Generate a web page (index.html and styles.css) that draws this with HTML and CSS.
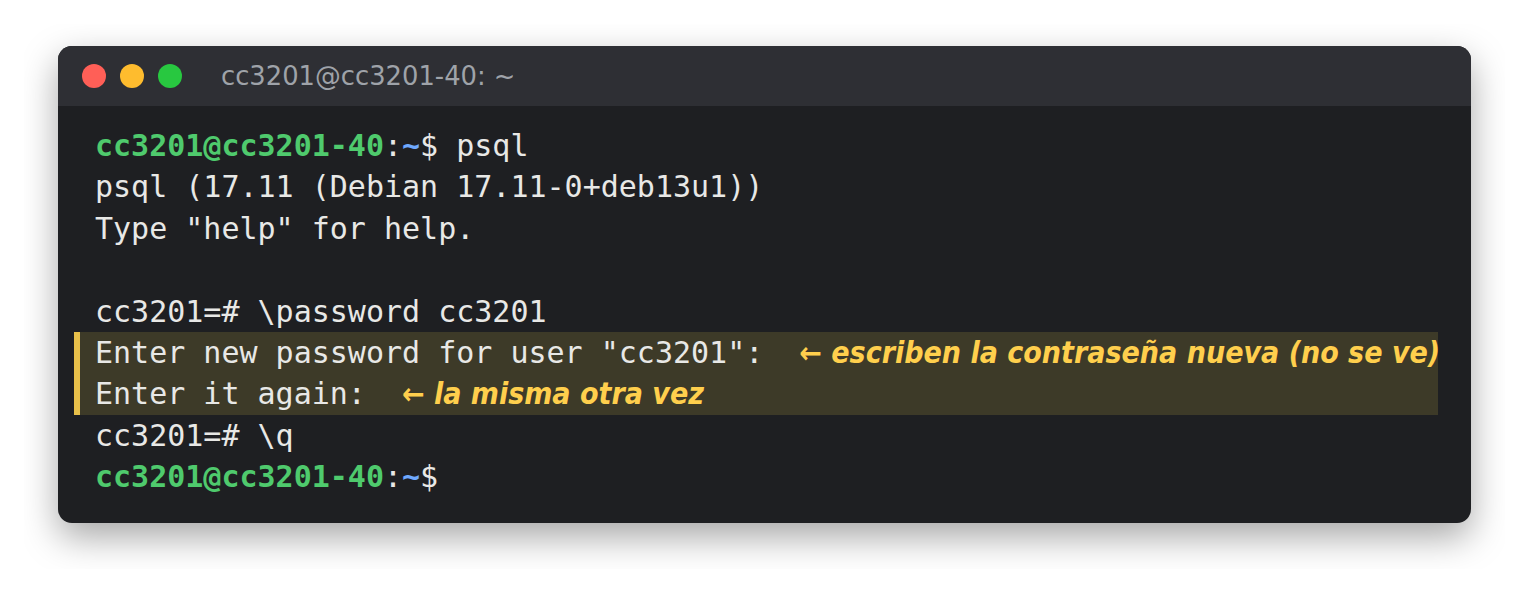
FILE: index.html
```html
<!DOCTYPE html>
<html>
<head>
<meta charset="utf-8">
<link rel="stylesheet" href="styles.css">
</head>
<body>
<div class="stage">
  <div class="window">
    <div class="titlebar">
      <div class="lights">
        <span class="light red"></span>
        <span class="light yellow"></span>
        <span class="light green"></span>
      </div>
      <div class="title">cc3201@cc3201-40: ~</div>
    </div>
    <div class="term">
      <div class="line"><span class="user">cc3201@cc3201-40</span>:<span class="path">~</span>$ psql</div>
      <div class="line">psql (17.11 (Debian 17.11-0+deb13u1))</div>
      <div class="line">Type "help" for help.</div>
      <div class="line">&nbsp;</div>
      <div class="line">cc3201=# \password cc3201</div>
      <div class="hl">
        <div class="hline">Enter new password for user "cc3201":<span class="note">← escriben la contraseña nueva (no se ve)</span></div>
        <div class="hline">Enter it again:<span class="note">← la misma otra vez</span></div>
      </div>
      <div class="line">cc3201=# \q</div>
      <div class="line"><span class="user">cc3201@cc3201-40</span>:<span class="path">~</span>$</div>
    </div>
  </div>
</div>
</body>
</html>
```
FILE: styles.css
```css
html, body {
  margin: 0;
  padding: 0;
  background: #ffffff;
}
.stage {
  margin: 24px;
  padding: 22px 34px 46px 34px;
  overflow: hidden;
  width: 1413px;
}
.window {
  width: 1413px;
  border-radius: 14px;
  overflow: hidden;
  background: #1e1f22;
  box-shadow: 0 14px 36px rgba(0, 0, 0, 0.35);
}
.titlebar {
  height: 60px;
  background: #2e2f34;
  display: flex;
  align-items: center;
  padding-left: 24px;
}
.lights {
  display: flex;
  gap: 14px;
}
.light {
  width: 24px;
  height: 24px;
  border-radius: 50%;
  display: block;
}
.red { background: #ff5f57; }
.yellow { background: #febc2e; }
.green { background: #28c840; }
.title {
  margin-left: 39px;
  font-family: "DejaVu Sans", sans-serif;
  font-size: 25.8px;
  color: #9fa3a9;
}
.term {
  padding: 19px 33px 25px 16px;
  font-family: "DejaVu Sans Mono", monospace;
  font-size: 30px;
  line-height: 41.4px;
  color: #e8e8e6;
}
.line,
.hline {
  white-space: pre;
  height: 41.4px;
}
.line {
  padding-left: 21px;
}
.user {
  color: #4fca6d;
  font-weight: bold;
}
.path {
  color: #6ea8fe;
  font-weight: bold;
}
.hl {
  background: #3d3a28;
  border-left: 6px solid #e8c04a;
  padding-left: 15px;
}
.note {
  margin-left: 36px;
  font-family: "DejaVu Sans Condensed", "DejaVu Sans", sans-serif;
  font-stretch: condensed;
  font-weight: bold;
  font-style: italic;
  font-size: 30px;
  line-height: 1;
  color: #ffcf4d;
}
```
